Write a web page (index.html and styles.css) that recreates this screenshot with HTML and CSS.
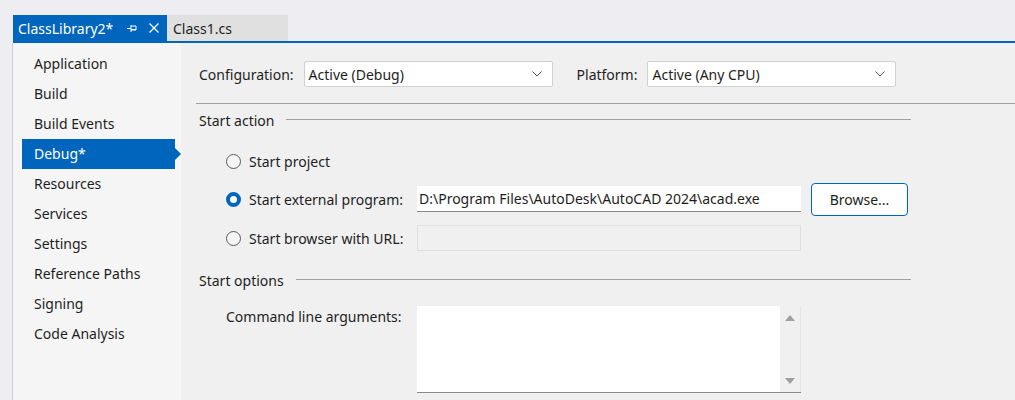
FILE: index.html
```html
<!DOCTYPE html>
<html>
<head>
<meta charset="utf-8">
<link rel="stylesheet" href="styles.css">
</head>
<body>
<div class="window">
  <div class="tabbar">
    <div class="tab active">
      <span class="tab-title">ClassLibrary2*</span>
      <svg class="pin" width="12" height="12" viewBox="0 0 12 12"><path d="M1 6.5h4M5 3v7M5 4h5v4H5M5 7.5h5" fill="none" stroke="#fff" stroke-width="1"/></svg>
      <svg class="close" width="12" height="12" viewBox="0 0 12 12"><path d="M1.5 1.5l9 9M10.5 1.5l-9 9" stroke="#fff" stroke-width="1.3"/></svg>
    </div>
    <div class="tab">Class1.cs</div>
  </div>
  <div class="body">
    <nav class="sidebar">
      <div class="nav-item">Application</div>
      <div class="nav-item">Build</div>
      <div class="nav-item">Build Events</div>
      <div class="nav-item selected">Debug*</div>
      <div class="nav-item">Resources</div>
      <div class="nav-item">Services</div>
      <div class="nav-item">Settings</div>
      <div class="nav-item">Reference Paths</div>
      <div class="nav-item">Signing</div>
      <div class="nav-item">Code Analysis</div>
    </nav>
    <main class="content">
      <div class="config-row">
        <span class="label">Configuration:</span>
        <div class="select"><span>Active (Debug)</span><svg width="10" height="6" viewBox="0 0 10 6"><path d="M0.5 0.5L5 5 9.5 0.5" fill="none" stroke="#555" stroke-width="1"/></svg></div>
        <span class="label platform">Platform:</span>
        <div class="select"><span>Active (Any CPU)</span><svg width="10" height="6" viewBox="0 0 10 6"><path d="M0.5 0.5L5 5 9.5 0.5" fill="none" stroke="#555" stroke-width="1"/></svg></div>
      </div>
      <div class="rule"></div>
      <div class="section-head"><span>Start action</span><div class="line"></div></div>
      <div class="options">
        <div class="opt-row">
          <label class="radio"><span class="dot"></span>Start project</label>
        </div>
        <div class="opt-row">
          <label class="radio checked"><span class="dot"></span>Start external program:</label>
          <div class="textbox">D:\Program Files\AutoDesk\AutoCAD 2024\acad.exe</div>
          <button class="btn">Browse...</button>
        </div>
        <div class="opt-row">
          <label class="radio"><span class="dot"></span>Start browser with URL:</label>
          <div class="textbox disabled"></div>
        </div>
      </div>
      <div class="section-head second"><span>Start options</span><div class="line"></div></div>
      <div class="args-row">
        <span class="args-label">Command line arguments:</span>
        <div class="textarea">
          <div class="scroll">
            <svg width="10" height="6" viewBox="0 0 10 6"><path d="M0 6L5 0 10 6z" fill="#a0a0a0"/></svg>
            <svg width="10" height="6" viewBox="0 0 10 6"><path d="M0 0L5 6 10 0z" fill="#a0a0a0"/></svg>
          </div>
        </div>
      </div>
    </main>
  </div>
</div>
</body>
</html>
```
FILE: styles.css
```css
* { box-sizing: border-box; }
html, body { margin: 0; padding: 0; }
body {
  width: 1015px;
  height: 400px;
  overflow: hidden;
  background: #eeeef2;
  font-family: "Noto Sans", "Segoe UI", sans-serif;
  font-size: 14px;
  color: #1e1e1e;
}
.window {
  padding-top: 15px;
  padding-left: 13px;
  height: 400px;
  display: flex;
  flex-direction: column;
}
.tabbar {
  display: flex;
  height: 28px;
  border-bottom: 2px solid #0065bd;
}
.tab {
  height: 26px;
  display: flex;
  align-items: center;
  background: #e0e0e0;
  width: 121px;
  padding-left: 6px;
  font-size: 14px;
  color: #1e1e1e;
}
.tab.active {
  background: #0065bd;
  color: #fff;
  width: 154px;
  padding-left: 5px;
}
.tab-title { flex: 0 0 auto; }
.pin { margin-left: 13px; }
.close { margin-left: 10px; }
.body {
  flex: 1;
  display: flex;
  border-left: 1px solid #ccccdc;
  margin-left: -1px;
}
.sidebar {
  width: 168px;
  background: #f5f5f5;
  padding-top: 6px;
  padding-left: 9px;
}
.nav-item {
  height: 30px;
  line-height: 30px;
  padding-left: 12px;
  width: 153px;
  position: relative;
  font-size: 14px;
}
.nav-item.selected {
  background: #0065bd;
  color: #fff;
}
.nav-item.selected::after {
  content: "";
  position: absolute;
  right: -6px;
  top: 9px;
  border-left: 6px solid #0065bd;
  border-top: 6px solid transparent;
  border-bottom: 6px solid transparent;
}
.content {
  flex: 1;
  background: #f0f0f0;
  padding-left: 18px;
}
.config-row {
  display: flex;
  align-items: center;
  height: 26px;
  margin-top: 18px;
}
.label { margin-right: 10px; }
.label.platform { margin-left: 24px; margin-right: 10px; }
.select {
  width: 249px;
  height: 26px;
  background: #fff;
  border: 1px solid #d0d0d0;
  border-radius: 2px;
  display: flex;
  align-items: center;
  justify-content: space-between;
  padding: 0 10px 0 4px;
}
.rule {
  height: 1px;
  background: #a0a0a0;
  margin-top: 16px;
  margin-left: -3px;
}
.section-head {
  display: flex;
  align-items: center;
  height: 20px;
  margin-top: 6px;
  width: 712px;
}
.section-head .line {
  flex: 1;
  height: 1px;
  background: #a0a0a0;
  margin-left: 12px;
  margin-top: -2px;
}
.section-head.second { margin-top: 19px; }
.options {
  padding-left: 27px;
  margin-top: 18px;
}
.opt-row {
  display: flex;
  align-items: center;
  height: 26px;
  margin-bottom: 12px;
}
.opt-row:nth-child(2) { margin-bottom: 13px; }
.opt-row:last-child { margin-bottom: 0; }
.radio {
  display: flex;
  align-items: center;
  width: 191px;
  font-size: 14px;
}
.dot {
  width: 15px;
  height: 15px;
  border-radius: 50%;
  border: 1px solid #5a5a5a;
  background: #f5f5f5;
  margin-right: 8px;
  flex: 0 0 auto;
}
.radio.checked .dot {
  background: #fff;
  border: 4px solid #0065bd;
}
.textbox {
  width: 384px;
  height: 26px;
  background: #fff;
  border-bottom: 1px solid #8a8a8a;
  padding-left: 2px;
  line-height: 25px;
  font-size: 14px;
}
.textbox.disabled {
  background: #f0f0f0;
  border: 1px solid #e0e0e0;
}
.btn {
  margin-left: 10px;
  width: 97px;
  height: 33px;
  background: #fff;
  border: 1px solid #0065bd;
  border-radius: 4px;
  font-family: inherit;
  font-size: 14px;
  color: #1e1e1e;
}
.args-row {
  display: flex;
  padding-left: 27px;
  margin-top: 16px;
}
.args-label {
  width: 191px;
  padding-top: 1px;
}
.textarea {
  width: 384px;
  height: 87px;
  background: #fff;
  border-bottom: 1px solid #8a8a8a;
  display: flex;
  justify-content: flex-end;
}
.scroll {
  width: 21px;
  background: #f0f0f0;
  border-right: 1px solid #e4e4e4;
  display: flex;
  flex-direction: column;
  justify-content: space-between;
  align-items: center;
  padding: 9px 0 8px;
}
```
